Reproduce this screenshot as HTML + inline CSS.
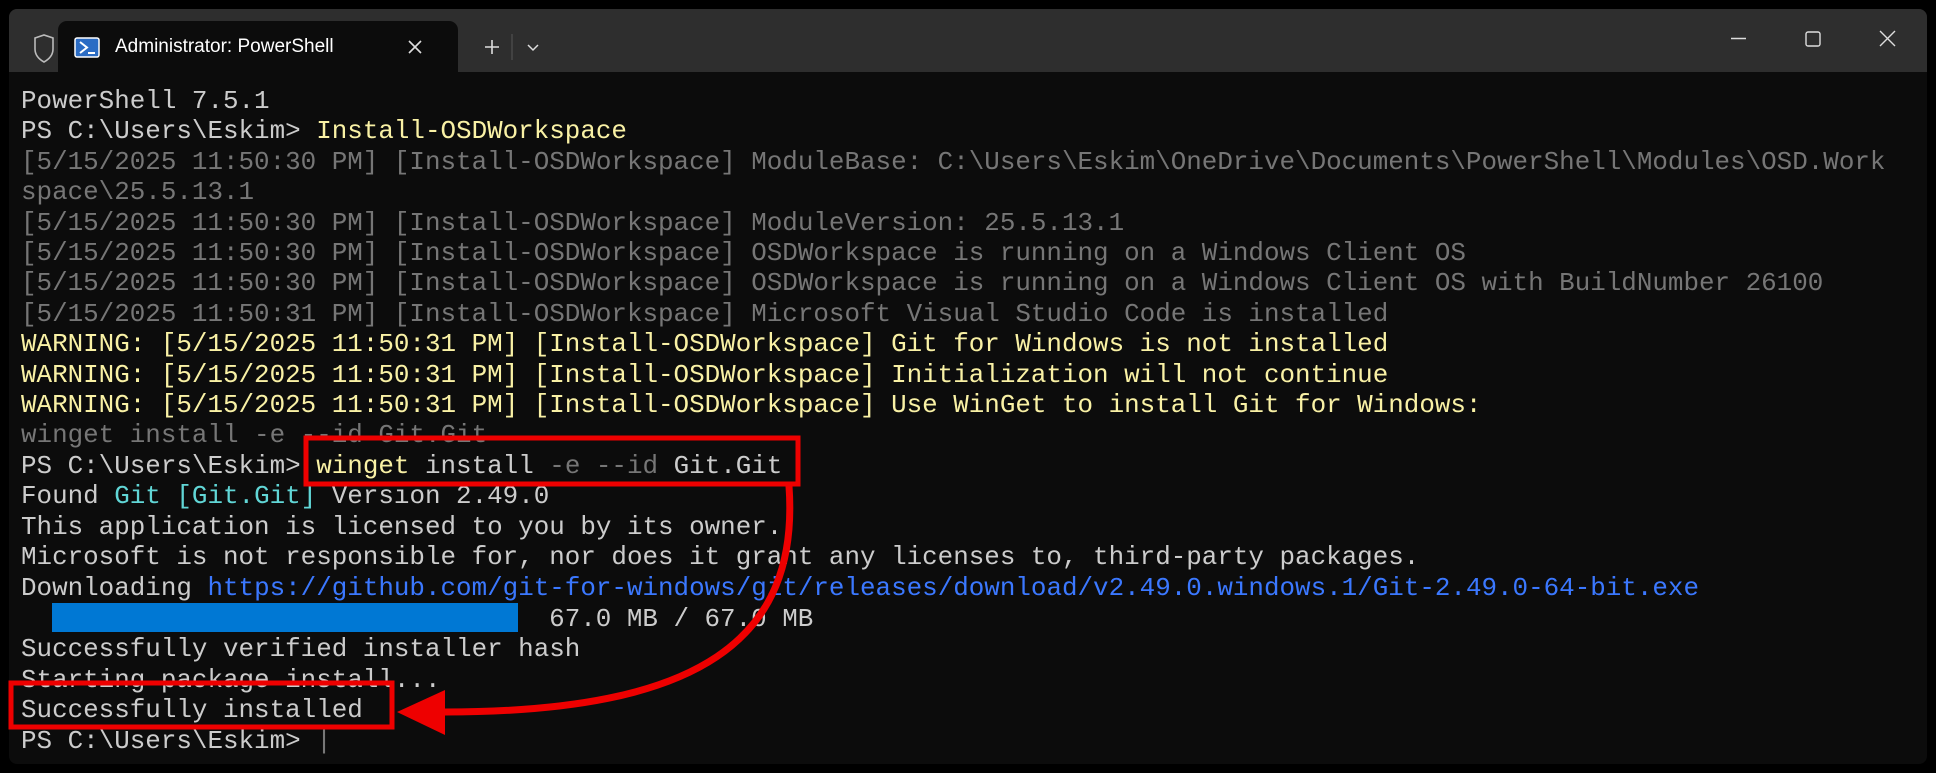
<!DOCTYPE html>
<html><head><meta charset="utf-8"><style>
html,body{margin:0;padding:0;background:#000;width:1936px;height:773px;overflow:hidden}
#win{position:absolute;left:9px;top:9px;width:1918px;height:755px;background:#0c0c0c;border-radius:8px;overflow:hidden}
#bar{position:absolute;left:0;top:0;width:100%;height:63px;background:#2e2e2e}
#tab{position:absolute;left:49px;top:12px;width:400px;height:51px;background:#0c0c0c;border-radius:9px 9px 0 0}
.t{position:absolute;font-family:"Liberation Sans",sans-serif;color:#fff}
#term{position:absolute;left:12px;top:77px;font-family:"Liberation Mono",monospace;font-size:25.9px;line-height:30.4px;color:#cccccc;white-space:pre}
.g{color:#767676}.y{color:#f9f1a5}.c{color:#61d6d6}.b{color:#3b78ff}
.bar{display:inline-block;width:466px;height:29px;background:#0078d4;vertical-align:-6px}
</style></head><body>
<div id="win">
<div id="bar"></div>
<div id="tab"></div>
<svg style="position:absolute;left:0;top:0" width="1918" height="63">
<path d="M26 29 L35 26 L44 29 L44 40 Q44 48 35 53 Q26 48 26 40 Z" fill="none" stroke="#bbb" stroke-width="1.6"/>
<rect x="66" y="29" width="24" height="19" rx="2" fill="#2b6cc4" stroke="#fff" stroke-width="1.5"/>
<path d="M71 33 L78 38.5 L71 44" fill="none" stroke="#fff" stroke-width="2"/>
<path d="M79 44 L86 44" stroke="#fff" stroke-width="2"/>
<path d="M400 32 L412 44 M412 32 L400 44" stroke="#ddd" stroke-width="1.6"/>
<path d="M476 38 L490 38 M483 31 L483 45" stroke="#ddd" stroke-width="1.6"/>
<path d="M503 25 L503 51" stroke="#555" stroke-width="1"/>
<path d="M519 36 L524 41 L529 36" fill="none" stroke="#ddd" stroke-width="1.5"/>
<path d="M1722 29.5 L1737 29.5" stroke="#ddd" stroke-width="1.4"/>
<rect x="1797" y="23" width="14" height="14" rx="2" fill="none" stroke="#ddd" stroke-width="1.4"/>
<path d="M1871 22 L1886 37 M1886 22 L1871 37" stroke="#ddd" stroke-width="1.4"/>
</svg>
<div class="t" style="left:106px;top:27px;font-size:19px">Administrator: PowerShell</div>
<div id="term">PowerShell 7.5.1
PS C:\Users\Eskim&gt; <span class="y">Install-OSDWorkspace</span>
<span class="g">[5/15/2025 11:50:30 PM] [Install-OSDWorkspace] ModuleBase: C:\Users\Eskim\OneDrive\Documents\PowerShell\Modules\OSD.Work
space\25.5.13.1
[5/15/2025 11:50:30 PM] [Install-OSDWorkspace] ModuleVersion: 25.5.13.1
[5/15/2025 11:50:30 PM] [Install-OSDWorkspace] OSDWorkspace is running on a Windows Client OS
[5/15/2025 11:50:30 PM] [Install-OSDWorkspace] OSDWorkspace is running on a Windows Client OS with BuildNumber 26100
[5/15/2025 11:50:31 PM] [Install-OSDWorkspace] Microsoft Visual Studio Code is installed</span>
<span class="y">WARNING: [5/15/2025 11:50:31 PM] [Install-OSDWorkspace] Git for Windows is not installed
WARNING: [5/15/2025 11:50:31 PM] [Install-OSDWorkspace] Initialization will not continue
WARNING: [5/15/2025 11:50:31 PM] [Install-OSDWorkspace] Use WinGet to install Git for Windows:</span>
<span class="g">winget install -e --id Git.Git</span>
PS C:\Users\Eskim&gt; <span class="y">winget</span> install <span class="g">-e --id</span> Git.Git
Found <span class="c">Git [Git.Git]</span> Version 2.49.0
This application is licensed to you by its owner.
Microsoft is not responsible for, nor does it grant any licenses to, third-party packages.
Downloading <span class="b">https://github.com/git-for-windows/git/releases/download/v2.49.0.windows.1/Git-2.49.0-64-bit.exe</span>
  <span class="bar"></span>  67.0 MB / 67.0 MB
Successfully verified installer hash
Starting package install...
Successfully installed
PS C:\Users\Eskim&gt; <span style="color:#777">|</span></div>
</div>
<svg style="position:absolute;left:0;top:0" width="1936" height="773">
<rect x="306" y="438" width="492" height="46" fill="none" stroke="#e00" stroke-width="5"/>
<rect x="11" y="683" width="381" height="44" fill="none" stroke="#e00" stroke-width="5"/>
<path d="M789 486 C 800 640, 700 712, 445 712" fill="none" stroke="#e00" stroke-width="7"/>
<path d="M397 712 L445 690 L445 735 Z" fill="#e00"/>
</svg>
</body></html>
